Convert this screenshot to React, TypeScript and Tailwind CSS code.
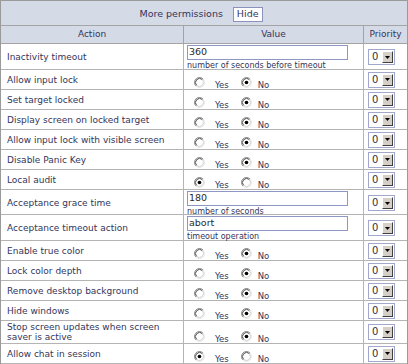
import React from 'react'

type Row =
  | { label: string; kind: 'text'; value: string; hint: string; h: string }
  | { label: string; kind: 'radio'; yes: boolean; h: string }

const rows: Row[] = [
  { label: 'Inactivity timeout', kind: 'text', value: '360', hint: 'number of seconds before timeout', h: 'h-[26px]' },
  { label: 'Allow input lock', kind: 'radio', yes: false, h: 'h-[20px]' },
  { label: 'Set target locked', kind: 'radio', yes: false, h: 'h-[20px]' },
  { label: 'Display screen on locked target', kind: 'radio', yes: false, h: 'h-[20px]' },
  { label: 'Allow input lock with visible screen', kind: 'radio', yes: false, h: 'h-[20px]' },
  { label: 'Disable Panic Key', kind: 'radio', yes: false, h: 'h-[20px]' },
  { label: 'Local audit', kind: 'radio', yes: true, h: 'h-[20px]' },
  { label: 'Acceptance grace time', kind: 'text', value: '180', hint: 'number of seconds', h: 'h-[25px]' },
  { label: 'Acceptance timeout action', kind: 'text', value: 'abort', hint: 'timeout operation', h: 'h-[26px]' },
  { label: 'Enable true color', kind: 'radio', yes: false, h: 'h-[20px]' },
  { label: 'Lock color depth', kind: 'radio', yes: false, h: 'h-[20px]' },
  { label: 'Remove desktop background', kind: 'radio', yes: false, h: 'h-[20px]' },
  { label: 'Hide windows', kind: 'radio', yes: false, h: 'h-[20px]' },
  { label: 'Stop screen updates when screen saver is active', kind: 'radio', yes: false, h: 'h-[23px]' },
  { label: 'Allow chat in session', kind: 'radio', yes: true, h: 'h-[20px]' },
]

function Radio({ checked }: { checked: boolean }) {
  return (
    <svg width="11" height="11" viewBox="0 0 12 12" className="shrink-0">
      <circle cx="6" cy="6" r="5.5" fill="#fff" />
      {/* shaded edges, old windows style */}
      <path d="M2.11 9.89 A5.5 5.5 0 0 1 9.89 2.11" stroke="#8a8a8a" strokeWidth="1" fill="none" />
      <path d="M2.82 9.18 A4.5 4.5 0 0 1 9.18 2.82" stroke="#3a3a3a" strokeWidth="1" fill="none" />
      <path d="M9.89 2.11 A5.5 5.5 0 0 1 2.11 9.89" stroke="#e8e8e8" strokeWidth="1" fill="none" />
      <path d="M9.18 2.82 A4.5 4.5 0 0 1 2.82 9.18" stroke="#cfccc4" strokeWidth="1" fill="none" />
      {checked && <circle cx="6" cy="6" r="2" fill="#000" />}
    </svg>
  )
}

function Select() {
  return (
    <div className="flex h-[16px] w-[27px] border border-[#a2a7cc] bg-white">
      <span className="flex-1 pl-[3px] text-[10px] leading-[14px] text-[#333]">0</span>
      <span className="m-[1px] flex w-[11px] items-center justify-center border border-t-white border-l-white border-r-[#404040] border-b-[#404040] bg-[#d4d0c8]">
        <svg width="5" height="3" viewBox="0 0 5 3">
          <path d="M0 0h5L2.5 3z" fill="#000" />
        </svg>
      </span>
    </div>
  )
}

export default function App() {
  return (
    <div
      className="w-[408px] overflow-hidden border border-[#9a9a9a] text-[9px] text-[#33355a]"
      style={{ fontFamily: '"DejaVu Sans", Verdana, sans-serif' }}
    >
      {/* title bar */}
      <div className="flex h-[25px] items-center justify-center gap-[10px] border-b border-[#a4a4a4] bg-[#d5dae7] pr-[6px] pt-[2px]">
        <span className="text-[9.5px]">More permissions</span>
        <span className="flex h-[15px] items-center border border-[#8d92bd] bg-white px-[3px] text-[9.5px]">Hide</span>
      </div>

      {/* column headers */}
      <div className="grid h-[18px] grid-cols-[183px_180px_1fr] border-b border-[#a4a4a4] bg-[#d5dae7]">
        <div className="flex items-center justify-center border-r border-[#a4a4a4]">Action</div>
        <div className="flex items-center justify-center border-r border-[#a4a4a4]">Value</div>
        <div className="flex items-center justify-center">Priority</div>
      </div>

      {rows.map((r) => (
        <div key={r.label} className={`grid grid-cols-[183px_180px_1fr] border-b border-[#b4b4b4] bg-white ${r.h}`}>
          <div className="flex items-center border-r border-[#b4b4b4] pl-[6px] pr-[4px] leading-[10px]">{r.label}</div>
          {r.kind === 'text' ? (
            <div className="flex flex-col border-r border-[#b4b4b4] pl-[3px] pt-[1px]">
              <div className="flex h-[15px] w-[161px] items-center border border-[#8e97c4] bg-white pl-[1px] text-[9.5px] text-[#2a2a2a]">
                {r.value}
              </div>
              <div className="mt-[1px] text-[8px] leading-[9px]">{r.hint}</div>
            </div>
          ) : (
            <div className="flex items-end border-r border-[#b4b4b4] pl-[10px]">
              <div className="flex items-baseline">
                <Radio checked={r.yes} />
                <span className="ml-[10px] text-[8.5px] leading-none">Yes</span>
                <span className="ml-[12px]">
                  <Radio checked={!r.yes} />
                </span>
                <span className="ml-[6px] text-[8.5px] leading-none">No</span>
              </div>
            </div>
          )}
          <div className="flex items-center pl-[4px]">
            <Select />
          </div>
        </div>
      ))}
    </div>
  )
}
